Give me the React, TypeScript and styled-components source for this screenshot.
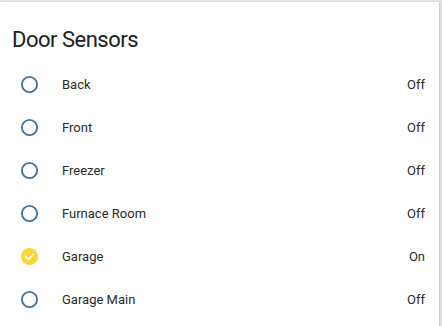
import React from 'react';
import styled, { createGlobalStyle } from 'styled-components';

const GlobalStyle = createGlobalStyle`
  html, body {
    margin: 0;
    padding: 0;
    background: #e6e6e6;
    font-family: Roboto, "Noto Sans", sans-serif;
  }
`;

const Page = styled.div`
  width: 442px;
  height: 326px;
  padding-top: 2px;
  box-sizing: border-box;
  overflow: hidden;
`;

const Card = styled.div`
  width: 439px;
  height: 324px;
  background: #fff;
  box-shadow: 1px 0 2px rgba(0, 0, 0, 0.15);
  box-sizing: border-box;
`;

const Header = styled.h1`
  margin: 0;
  padding: 22px 12px 0;
  height: 61px;
  box-sizing: border-box;
  font-size: 22px;
  letter-spacing: -0.5px;
  font-weight: 400;
  color: #212121;
  line-height: 32px;
`;

const List = styled.div`
  display: flex;
  flex-direction: column;
`;

const Row = styled.div`
  height: 43px;
  display: flex;
  align-items: center;
  padding: 0 14px 0 20px;
`;

const Badge = styled.div`
  width: 19px;
  height: 19px;
  display: flex;
  align-items: center;
  justify-content: center;
`;

const Name = styled.div`
  flex: 1;
  margin-left: 23px;
  font-size: 13px;
  color: #2b2b2b;
`;

const State = styled.div`
  font-size: 13px;
  color: #2b2b2b;
`;

const OffIcon = () => (
  <svg width="19" height="19" viewBox="0 0 19 19">
    <circle cx="9.5" cy="9.5" r="7.6" fill="none" stroke="#44739e" strokeWidth="1.9" />
  </svg>
);

const OnIcon = () => (
  <svg width="19" height="19" viewBox="0 0 19 19">
    <circle cx="9.5" cy="9.5" r="8.6" fill="#fdd835" />
    <path d="M5.6 9.7 L8.3 12.3 L13.4 7.2" fill="none" stroke="#fff" strokeWidth="1.9" strokeLinecap="round" strokeLinejoin="round" />
  </svg>
);

const sensors = [
  { name: 'Back', on: false },
  { name: 'Front', on: false },
  { name: 'Freezer', on: false },
  { name: 'Furnace Room', on: false },
  { name: 'Garage', on: true },
  { name: 'Garage Main', on: false },
];

export default function App() {
  return (
    <Page>
      <GlobalStyle />
      <Card>
        <Header>Door Sensors</Header>
        <List>
          {sensors.map(s => (
            <Row key={s.name}>
              <Badge>{s.on ? <OnIcon /> : <OffIcon />}</Badge>
              <Name>{s.name}</Name>
              <State>{s.on ? 'On' : 'Off'}</State>
            </Row>
          ))}
        </List>
      </Card>
    </Page>
  );
}
